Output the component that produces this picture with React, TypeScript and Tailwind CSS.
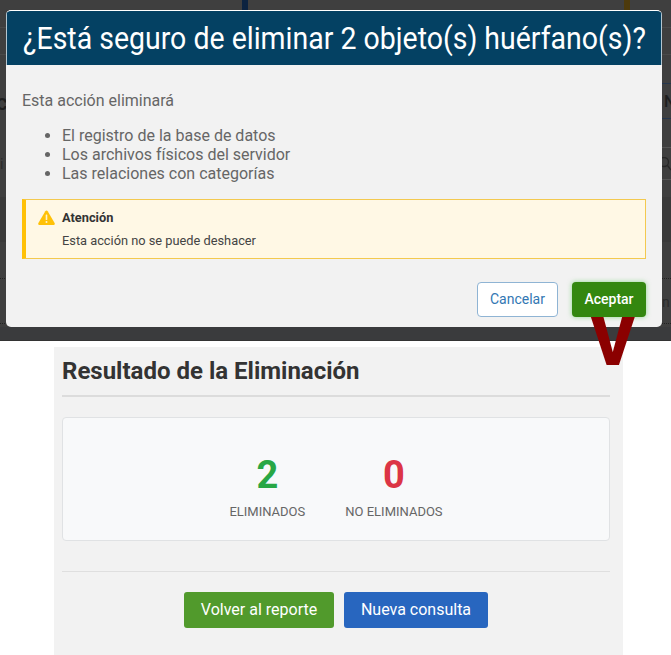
export default function App() {
  return (
    <div className="w-[671px] h-[655px] overflow-hidden bg-white font-['Roboto',sans-serif] relative">
      <div className="relative h-[341px] bg-[#3f3f3f] overflow-hidden">
        <div className="absolute left-[242px] top-0 w-[6px] h-[10px] bg-[#0c2340]" />
        <div className="absolute left-[624px] top-0 w-[6px] h-[10px] bg-[#4d3a0c]" />
        <div className="absolute left-0 top-[27px] w-full h-px bg-[#4a4a4a]" />
        <div className="absolute left-0 top-[54px] w-full h-px bg-[#4a4a4a]" />
        <div className="absolute left-[662px] top-[83px] w-[9px] h-px bg-[#26364d]" />
        <div className="absolute left-[662px] top-[118px] w-[9px] h-px bg-[#26364d]" />
        <div className="absolute left-[662px] top-[147px] w-[9px] h-px bg-[#555]" />
        <div className="absolute left-[662px] top-[179px] w-[9px] h-px bg-[#555]" />
        <div className="absolute left-0 top-[197px] w-full h-[45px] bg-[#3a3a3a]" />
        <div className="absolute left-0 top-[278px] w-full border-t border-dotted border-[#222]" />
        <div className="absolute left-0 top-[323px] w-full border-t border-dotted border-[#222]" />
        <div className="absolute left-0 top-[327px] w-full h-[14px] bg-[#3a3b3d]" />
        <div className="absolute left-0 top-[340px] w-full h-px bg-[#333]" />
        <span className="absolute left-[-4px] top-[92px] text-[22px] font-medium leading-none text-[#1e1e1e]">c</span>
        <span className="absolute left-0 top-[157px] text-[14px] leading-none text-[#2a2a2a]">i</span>
        <span className="absolute left-[664px] top-[94px] text-[16px] font-medium leading-none text-[#1e1e1e]">N</span>
        <span className="absolute left-[662px] top-[295px] text-[14px] leading-none text-[#2a2a2a]">n</span>
        <svg width="9" height="14" viewBox="0 0 9 14" className="absolute left-[662px] top-[157px]" fill="none" stroke="#262626" strokeWidth="1.3">
          <circle cx="2" cy="5" r="4.5" />
          <path d="M5.5 8.5 L9 13" />
        </svg>

        <div className="absolute left-[6px] top-[10px] w-[656px] h-[317px] bg-[#f2f2f2] rounded-[5px] overflow-hidden flex flex-col border-t border-white">
          <div className="h-[54px] bg-[#044163] flex items-center pl-[16px] whitespace-nowrap overflow-hidden border-l border-r border-white/70">
            <h2 className="text-[32px] leading-none font-normal text-white origin-left scale-x-[0.89]">¿Está seguro de eliminar 2 objeto(s) huérfano(s)?</h2>
          </div>
          <div className="flex-1 flex flex-col px-[16px] pt-[26px]">
            <p className="text-[16px] leading-[19px] text-[#666]">Esta acción eliminará</p>
            <ul className="list-disc pl-[40px] mt-[16px] text-[16px] leading-[19px] text-[#666]">
              <li>El registro de la base de datos</li>
              <li>Los archivos físicos del servidor</li>
              <li>Las relaciones con categorías</li>
            </ul>
            <div className="mt-[16px] h-[60px] bg-[#fff8e5] border border-[#f3c94f] border-l-4 border-l-[#ffc107] flex items-start pl-[12px] pt-[10px] gap-[7px]">
              <svg width="17" height="15" viewBox="0 0 17 15" className="shrink-0">
                <path d="M8.5 0.5 C9 0.5 9.4 0.8 9.7 1.2 L16.6 13 C17.1 13.9 16.5 15 15.4 15 L1.6 15 C0.5 15 -0.1 13.9 0.4 13 L7.3 1.2 C7.6 0.8 8 0.5 8.5 0.5 Z" fill="#ffc107" />
                <rect x="7.7" y="4.5" width="1.6" height="5.5" rx="0.6" fill="#fff3cd" />
                <circle cx="8.5" cy="12" r="1" fill="#fff3cd" />
              </svg>
              <div className="flex flex-col">
                <strong className="text-[12.8px] leading-[16px] font-bold text-[#333]">Atención</strong>
                <span className="mt-[7px] text-[12.8px] leading-[16px] text-[#444]">Esta acción no se puede deshacer</span>
              </div>
            </div>
            <div className="flex justify-end gap-[14px] mt-[23px]">
              <button className="w-[81px] h-[35px] rounded-[4px] border border-[#8fb4d4] bg-white text-[14px] text-[#3277b3]">Cancelar</button>
              <button className="w-[74px] h-[35px] rounded-[4px] bg-[#33870f] text-[14px] font-medium text-white shadow-[0_0_5px_rgba(60,190,60,0.55)]">Aceptar</button>
            </div>
          </div>
        </div>
      </div>

      <div className="ml-[54px] mt-[6px] w-[569px] h-[308px] bg-[#f2f2f2] pl-[8px] pr-[13px]">
        <h3 className="pt-[10px] h-[50px] text-[24px] leading-[28px] font-bold text-[#333] border-b-2 border-[#dcdcdc]">Resultado de la Eliminación</h3>
        <div className="mt-[20px] h-[124px] bg-[#f8f9fa] border border-[#e0e2e4] rounded-[4px] flex justify-center gap-[40px] pt-[36px]">
          <div className="flex flex-col items-center">
            <span className="text-[38px] leading-[42px] font-bold text-[#28a745]">2</span>
            <span className="mt-[8px] text-[13px] leading-[16px] text-[#666]">ELIMINADOS</span>
          </div>
          <div className="flex flex-col items-center">
            <span className="text-[38px] leading-[42px] font-bold text-[#dc3545]">0</span>
            <span className="mt-[8px] text-[13px] leading-[16px] text-[#666]">NO ELIMINADOS</span>
          </div>
        </div>
        <div className="mt-[30px] border-t border-[#dfdfdf] pt-[20px] flex justify-center gap-[10px]">
          <button className="w-[150px] h-[36px] rounded-[3px] bg-[#519a2c] text-[16px] font-normal text-white">Volver al reporte</button>
          <button className="w-[144px] h-[36px] rounded-[3px] bg-[#2866bf] text-[16px] font-normal text-white">Nueva consulta</button>
        </div>
      </div>

      <span className="absolute left-[591px] top-[319px] text-[66px] leading-[47px] font-black text-[#8b0000]">V</span>
    </div>
  );
}
